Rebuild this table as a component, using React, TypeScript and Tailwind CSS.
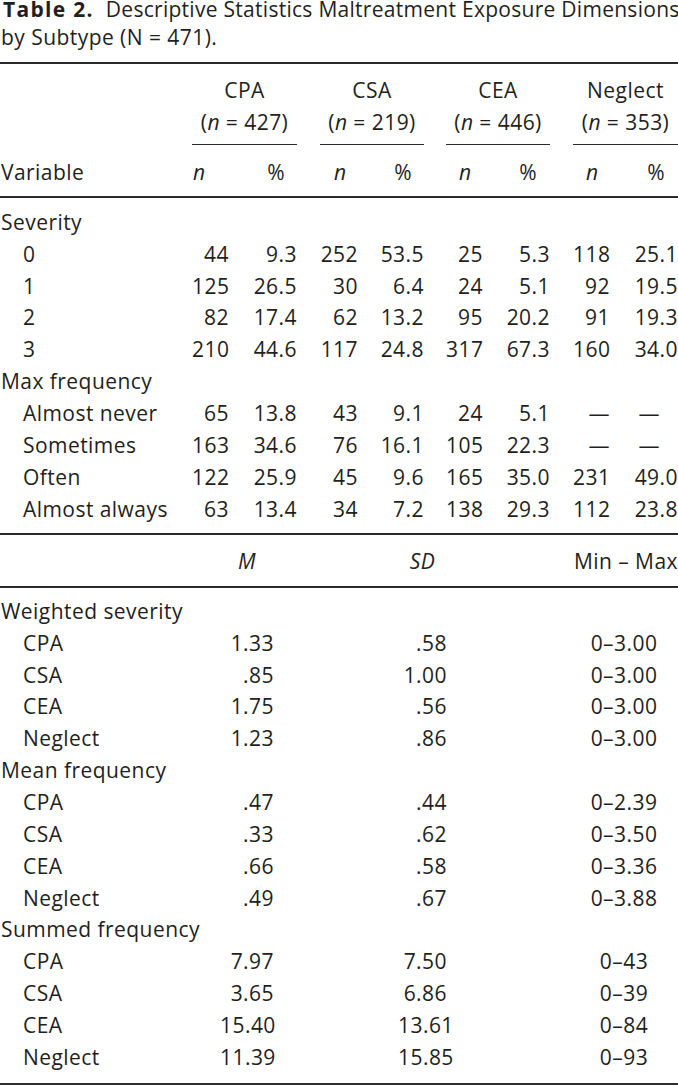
import React from "react";

type TopRow = { label: string; head?: boolean; v?: string[] };

const topRows: TopRow[] = [
  { label: "Severity", head: true },
  { label: "0", v: ["44", "9.3", "252", "53.5", "25", "5.3", "118", "25.1"] },
  { label: "1", v: ["125", "26.5", "30", "6.4", "24", "5.1", "92", "19.5"] },
  { label: "2", v: ["82", "17.4", "62", "13.2", "95", "20.2", "91", "19.3"] },
  { label: "3", v: ["210", "44.6", "117", "24.8", "317", "67.3", "160", "34.0"] },
  { label: "Max frequency", head: true },
  { label: "Almost never", v: ["65", "13.8", "43", "9.1", "24", "5.1", "—", "—"] },
  { label: "Sometimes", v: ["163", "34.6", "76", "16.1", "105", "22.3", "—", "—"] },
  { label: "Often", v: ["122", "25.9", "45", "9.6", "165", "35.0", "231", "49.0"] },
  { label: "Almost always", v: ["63", "13.4", "34", "7.2", "138", "29.3", "112", "23.8"] },
];

type BotRow = { label: string; head?: boolean; v?: string[] };

const botRows: BotRow[] = [
  { label: "Weighted severity", head: true },
  { label: "CPA", v: ["1.33", ".58", "0–3.00"] },
  { label: "CSA", v: [".85", "1.00", "0–3.00"] },
  { label: "CEA", v: ["1.75", ".56", "0–3.00"] },
  { label: "Neglect", v: ["1.23", ".86", "0–3.00"] },
  { label: "Mean frequency", head: true },
  { label: "CPA", v: [".47", ".44", "0–2.39"] },
  { label: "CSA", v: [".33", ".62", "0–3.50"] },
  { label: "CEA", v: [".66", ".58", "0–3.36"] },
  { label: "Neglect", v: [".49", ".67", "0–3.88"] },
  { label: "Summed frequency", head: true },
  { label: "CPA", v: ["7.97", "7.50", "0–43"] },
  { label: "CSA", v: ["3.65", "6.86", "0–39"] },
  { label: "CEA", v: ["15.40", "13.61", "0–84"] },
  { label: "Neglect", v: ["11.39", "15.85", "0–93"] },
];

const topGrid =
  "grid grid-cols-[192px_37px_68px_23px_38px_66px_22px_37px_67px_23px_37px_68px]";
const groupGrid = "grid grid-cols-[192px_105px_23px_104px_22px_104px_23px_105px]";
const botGrid = "grid grid-cols-[220px_54px_124px_49px_123px_108px]";

function Rule() {
  return <div className="h-[2px] w-full bg-[#2b2b2b]" />;
}

function TopDataRow({ row }: { row: TopRow }) {
  if (row.head) {
    return <div className="h-[31.86px] leading-[31.86px] pl-[1px]">{row.label}</div>;
  }
  const v = row.v!;
  const cell = (s: string, isPct: boolean) => {
    if (s === "—") {
      return (
        <div className={isPct ? "text-right pr-[18px]" : "text-right"}>{s}</div>
      );
    }
    return <div className="text-right">{s}</div>;
  };
  return (
    <div className={`${topGrid} h-[31.86px] leading-[31.86px]`}>
      <div className="pl-[23px] whitespace-nowrap">{row.label}</div>
      {cell(v[0], false)}
      {cell(v[1], true)}
      <div />
      {cell(v[2], false)}
      {cell(v[3], true)}
      <div />
      {cell(v[4], false)}
      {cell(v[5], true)}
      <div />
      {cell(v[6], false)}
      {cell(v[7], true)}
    </div>
  );
}

function BotDataRow({ row }: { row: BotRow }) {
  if (row.head) {
    return <div className="h-[31.86px] leading-[31.86px] pl-[1px]">{row.label}</div>;
  }
  const v = row.v!;
  return (
    <div className={`${botGrid} h-[31.86px] leading-[31.86px]`}>
      <div className="pl-[23px]">{row.label}</div>
      <div className="text-right">{v[0]}</div>
      <div />
      <div className="text-right">{v[1]}</div>
      <div />
      <div className="text-center">{v[2]}</div>
    </div>
  );
}

function GroupHead({ name, n }: { name: string; n: string }) {
  return (
    <div className="flex flex-col items-center leading-[32px] whitespace-nowrap">
      <div>{name}</div>
      <div>
        (<span className="italic">n</span> = {n})
      </div>
    </div>
  );
}

export default function App() {
  return (
    <div
      className="w-[678px] bg-white text-[#231f20] text-[21px] tracking-[0.45px]"
      style={{ fontFamily: "'Open Sans', Lato, 'Liberation Sans', sans-serif" }}
    >
      <div className="whitespace-nowrap">
        <div className="h-[18px] leading-[18px] pl-[3px]">
          <span className="font-bold tracking-[1.3px]">Table 2.</span>
          <span className="ml-[12px] tracking-[0.28px]">
            Descriptive Statistics Maltreatment Exposure Dimensions
          </span>
        </div>
        <div className="mt-[4.85px] h-[28px] leading-[28px] pl-[1px]">by Subtype (N = 471).</div>
      </div>

      <div className="mt-[11.15px]">
        <Rule />
      </div>

      <div className={`${groupGrid} mt-[9.85px]`}>
        <div />
        <GroupHead name="CPA" n="427" />
        <div />
        <GroupHead name="CSA" n="219" />
        <div />
        <GroupHead name="CEA" n="446" />
        <div />
        <GroupHead name="Neglect" n="353" />
      </div>

      <div className={`${groupGrid} mt-[6.15px]`}>
        <div />
        <div className="h-[1.5px] bg-[#2b2b2b]" />
        <div />
        <div className="h-[1.5px] bg-[#2b2b2b]" />
        <div />
        <div className="h-[1.5px] bg-[#2b2b2b]" />
        <div />
        <div className="h-[1.5px] bg-[#2b2b2b]" />
      </div>

      <div className={`${groupGrid} mt-[10.35px] h-[32px] leading-[32px]`}>
        <div className="pl-[1px]">Variable</div>
        <div className="flex justify-between pr-[12px]">
          <span className="italic pl-[1px]">n</span>
          <span>%</span>
        </div>
        <div />
        <div className="flex justify-between pl-[14px] pr-[12px]">
          <span className="italic">n</span>
          <span>%</span>
        </div>
        <div />
        <div className="flex justify-between pl-[13px] pr-[13px]">
          <span className="italic">n</span>
          <span>%</span>
        </div>
        <div />
        <div className="flex justify-between pl-[13px] pr-[13px]">
          <span className="italic">n</span>
          <span>%</span>
        </div>
      </div>

      <div className="mt-[8.15px]">
        <Rule />
      </div>

      <div className="mt-[8.92px]">
        {topRows.map((r, i) => (
          <TopDataRow key={i} row={r} />
        ))}
      </div>

      <div className="mt-[8px]">
        <Rule />
      </div>

      <div className={`${botGrid} mt-[10.42px] h-[31.86px] leading-[31.86px]`}>
        <div />
        <div className="flex justify-center">
          <span className="italic">M</span>
        </div>
        <div />
        <div className="flex justify-center">
          <span className="italic">SD</span>
        </div>
        <div />
        <div className="text-right whitespace-nowrap">Min – Max</div>
      </div>

      <div className="mt-[8.2px]">
        <Rule />
      </div>

      <div className="mt-[7.92px]">
        {botRows.map((r, i) => (
          <BotDataRow key={i} row={r} />
        ))}
      </div>

      <div className="mt-[9.2px]">
        <Rule />
      </div>
    </div>
  );
}
